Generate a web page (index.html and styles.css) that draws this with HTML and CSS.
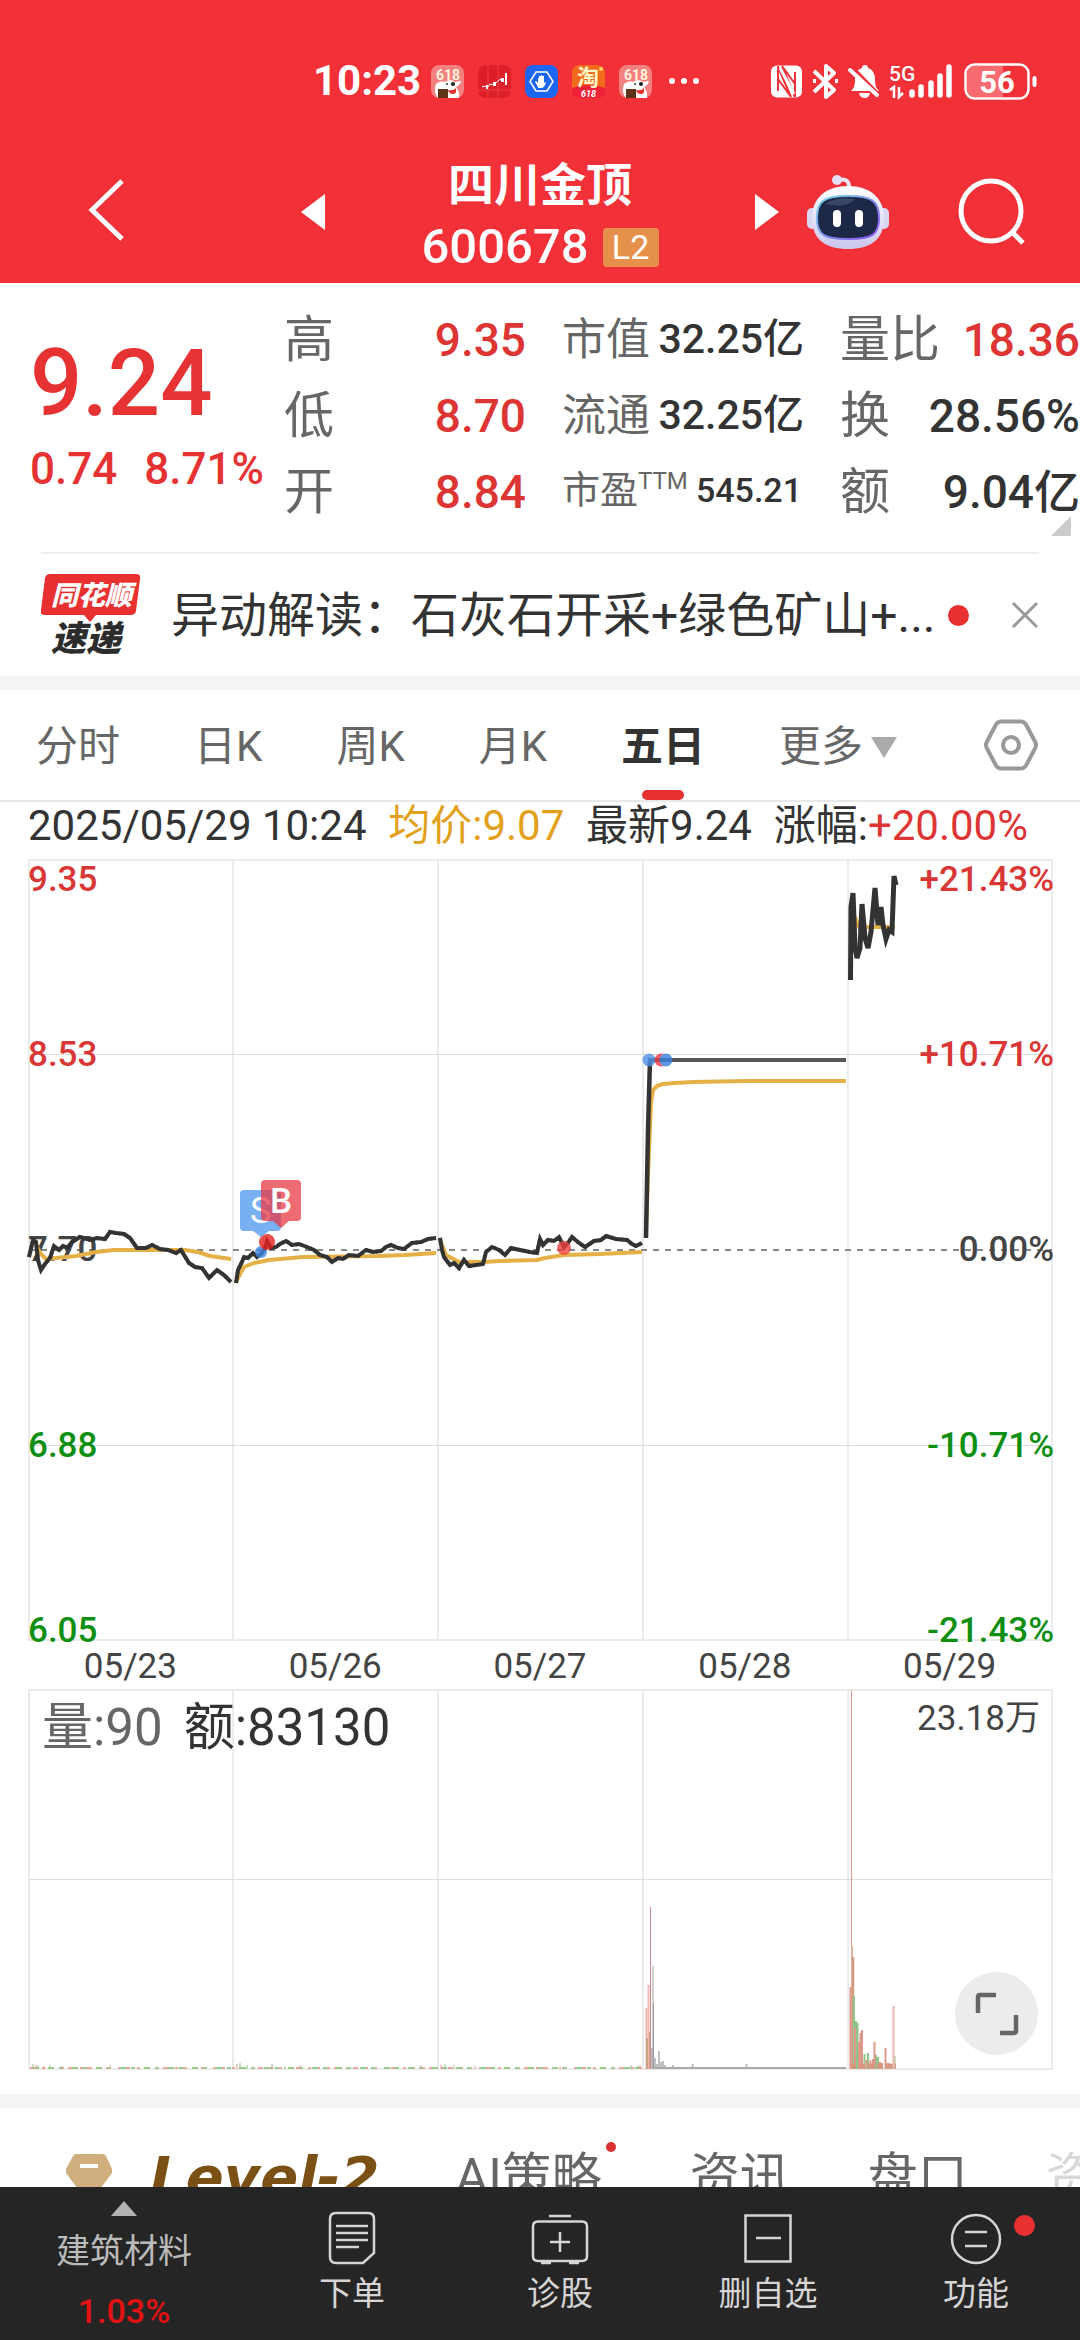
FILE: index.html
```html
<!DOCTYPE html>
<html lang="zh-CN">
<head>
<meta charset="utf-8">
<meta name="viewport" content="width=device-width, initial-scale=1">
<title>四川金顶 600678</title>
<link rel="stylesheet" href="styles.css">
</head>
<body>
<header class="header">
  <div class="status">
    <div class="status-left">
      <span class="clock">10:23</span>
      <svg class="app" viewBox="0 0 33 33" aria-hidden="true"><rect width="33" height="33" rx="8" fill="#f4807f"/><text x="5" y="15" font-size="14" font-weight="700" fill="#fff3dc">618</text><path d="M5 19q5-4 9-2 5-4 10 0 4-1 6-1-1 4-5 6 4 5 3 11H7Q2 27 5 19z" fill="#fff"/><circle cx="16" cy="19" r="1" fill="#333"/><circle cx="22" cy="19" r="2" fill="#222"/><path d="M17 25q6 1 8-2 1 6-3 6-4 0-5-4z" fill="#e2322f"/><rect x="7" y="24" width="10" height="9" fill="#5d3418"/></svg>
      <svg class="app" viewBox="0 0 33 33" aria-hidden="true"><rect width="33" height="33" rx="8" fill="#dc1f28"/><path d="M10 0v33M20 0v33M0 25h33" stroke="#ef4047" fill="none"/><path d="M4 22l3-1 2 2 3-4 3 1 3-2 3-3 4-1" stroke="#fff" fill="none"/><path d="M8 20h2v4H8zM15 17h3v4h-3zM23 13h3v4h-3zM27 8h2v12h-2z" fill="#fff"/></svg>
      <svg class="app" viewBox="0 0 33 33" aria-hidden="true"><rect width="33" height="33" rx="8" fill="#1c66f2"/><path d="M11 7h11l6 9.500-6 9.500H11L5 16.500z" fill="none" stroke="#fff" stroke-width="1.500"/><path d="M13 22l-3-5 1-1 2 2v-5h1v-2h2v-1h1v1h2v7l2-1q-1 5-4 6h-4z" fill="#fff"/></svg>
      <svg class="app" viewBox="0 0 33 33" aria-hidden="true"><rect width="33" height="33" rx="8" fill="#f26a1c"/><path d="M0 23q16-6 33 0v3q0 7-7 7H8q-8 0-8-7z" fill="#ee2138"/><circle cx="29" cy="4" r="2" fill="#ffd36a"/><text x="5" y="20" font-size="22" font-weight="700" fill="#fff8c8">淘</text><text x="9" y="32" font-size="9" font-weight="700" font-style="italic" fill="#fff">618</text></svg>
      <svg class="app" viewBox="0 0 33 33" aria-hidden="true"><rect width="33" height="33" rx="8" fill="#f4807f"/><text x="5" y="15" font-size="14" font-weight="700" fill="#fff3dc">618</text><path d="M5 19q5-4 9-2 5-4 10 0 4-1 6-1-1 4-5 6 4 5 3 11H7Q2 27 5 19z" fill="#fff"/><circle cx="16" cy="19" r="1" fill="#333"/><circle cx="22" cy="19" r="2" fill="#222"/><path d="M17 25q6 1 8-2 1 6-3 6-4 0-5-4z" fill="#e2322f"/><rect x="7" y="24" width="10" height="9" fill="#5d3418"/></svg>
      <svg class="more-dots" width="32" height="8" viewBox="0 0 32 8" fill="#fff" aria-hidden="true"><circle cx="4" cy="4" r="3"/><circle cx="16" cy="4" r="3"/><circle cx="28" cy="4" r="3"/></svg>
    </div>
    <svg class="signals" width="268" height="40" viewBox="768 60 268 40" role="img" aria-label="5G 56%">
      <rect x="770" y="64.500" width="31" height="32" rx="6" fill="#fff"/>
      <path d="M777 65v25M794 96V71" stroke="#f23038" stroke-width="2"/><path d="M781 65l13 18v13zM790 96l-13-18V66z" fill="none" stroke="#f23038" stroke-width="2"/><path d="M779 67l14 26" stroke="#fff" stroke-width="3"/>
      <path d="M813 70l20 19-8 7V65l8 7-20 19M812 80h3M834 80h3" stroke="#fff" stroke-width="4" fill="none" stroke-linejoin="round"/>
      <path d="M850 90q4-3 4-11 0-10 7-12 0-3 3-3t3 3q7 2 7 12 0 8 4 11z" fill="#fff"/><path d="M858 92h11q-1 5-5 5-5 0-6-5z" fill="#fff"/><path d="M850 66l27 28" stroke="#f23038" stroke-width="5"/><path d="M849 69l27 25" stroke="#fff" stroke-width="4" stroke-linecap="round"/>
      <text x="888" y="80" font-size="21" font-weight="500" fill="#fff">5G</text>
      <path d="M889 89l4-3v11M898 86v10l4-4" fill="none" stroke="#fff" stroke-width="2.500"/>
      <path d="M911 91v3M920 86v8M930 82v12M939 75v19M948 66v28" stroke="#fff" stroke-width="5.500" stroke-linecap="round"/>
      <rect x="964.500" y="63.500" width="63" height="34" rx="8" fill="#f23038"/><path d="M1002 65h-30q-6 0-6 7v17q0 7 6 7h30z" fill="#f66a70"/><rect x="964.500" y="63.500" width="63" height="34" rx="9" fill="none" stroke="#fff" stroke-width="2.500"/>
      <path d="M1033.500 77v7" stroke="#fff" stroke-width="4" stroke-linecap="round"/>
      <text x="996" y="92" font-size="31" font-weight="700" fill="#fff" text-anchor="middle">56</text>
    </svg>
  </div>
  <div class="nav">
    <button class="nav-btn back" aria-label="返回"><svg width="38" height="64" viewBox="0 0 38 64"><path d="M34 3L4 32l30 29" fill="none" stroke="#fff" stroke-width="5"/></svg></button>
    <button class="nav-btn prev" aria-label="上一只"><svg width="24" height="36" viewBox="0 0 24 36"><path d="M24 0v36L0 18z" fill="#fff"/></svg></button>
    <h1 class="title"><span class="name">四川金顶</span><span class="code">600678<span class="level">L2</span></span></h1>
    <button class="nav-btn" aria-label="下一只"><svg width="24" height="36" viewBox="0 0 24 36"><path d="M0 0v36l24-18z" fill="#fff"/></svg></button>
    <button class="nav-btn robot" aria-label="智能助手"><svg width="82" height="76" viewBox="0 0 82 76">
      <defs><linearGradient id="shell" x1="0" y1="0" x2="0" y2="1"><stop offset="0" stop-color="#fff"/><stop offset="1" stop-color="#c9c8ee"/></linearGradient><linearGradient id="rim" x1="0" y1="0" x2="1" y2="1"><stop offset="0" stop-color="#6fd6e6"/><stop offset="1" stop-color="#8a4ff0"/></linearGradient></defs>
      <path d="M31 6q12-3 11 9" fill="none" stroke="#ece6f8" stroke-width="4"/><circle cx="30" cy="6" r="5" fill="#e6e0f4"/>
      <rect x="0" y="34" width="10" height="21" rx="5" fill="#d9d7f3"/><rect x="72" y="34" width="10" height="21" rx="5" fill="#d9d7f3"/>
      <path d="M41 12c22 0 36 12 36 32 0 22-14 31-36 31S5 66 5 44c0-20 14-32 36-32z" fill="url(#shell)"/>
      <path d="M41 22c24 0 31 5 31 22s-7 21-31 21-31-4-31-21 7-22 31-22z" fill="#1d2746" stroke="url(#rim)" stroke-width="2"/>
      <path d="M18 30q12-8 30-5-8 10-30 5z" fill="#3b4666"/>
      <rect x="26" y="36" width="8" height="17" rx="4" fill="#fff"/><rect x="48" y="36" width="8" height="17" rx="4" fill="#fff"/></svg></button>
    <button class="nav-btn search" aria-label="搜索"><svg width="68" height="68" viewBox="0 0 68 68"><circle cx="33" cy="33" r="30" fill="none" stroke="#fff" stroke-width="5"/><path d="M54 54l11 11" stroke="#fff" stroke-width="5"/></svg></button>
  </div>
</header>

<main class="main">
  <section class="quote">
    <div class="price">
      <div class="last">9.24</div>
      <div class="change"><span>0.74</span><span>8.71%</span></div>
    </div>
    <dl class="stats">
      <div><dt>高</dt><dd class="up">9.35</dd></div>
      <div><dt>低</dt><dd class="up">8.70</dd></div>
      <div><dt>开</dt><dd class="up">8.84</dd></div>
    </dl>
    <dl class="stats inset compact">
      <div><dt>市值</dt><dd>32.25亿</dd></div>
      <div><dt>流通</dt><dd>32.25亿</dd></div>
      <div class="tiny"><dt>市盈<sup>TTM</sup></dt><dd>545.21</dd></div>
    </dl>
    <dl class="stats inset">
      <div><dt>量比</dt><dd class="up">18.36</dd></div>
      <div><dt>换</dt><dd>28.56%</dd></div>
      <div><dt>额</dt><dd>9.04亿</dd></div>
    </dl>
    <span class="corner"></span>
  </section>

  <section class="news">
    <svg class="news-logo" width="100" height="82" viewBox="0 0 100 82" role="img" aria-label="同花顺速递">
      <path d="M9 0h86q5 0 4 5l-4 32q-1 4-5 4H55l-6 7-6-7H4q-5 0-4-5L4 4q1-4 5-4z" fill="#e83031"/>
      <text x="10" y="31" font-size="27" font-weight="900" font-style="italic" fill="#fff">同花顺</text>
      <text x="10" y="77" font-size="35" font-weight="900" font-style="italic" fill="#2c2c2c">速递</text>
    </svg>
    <a class="news-text" href="#news">异动解读：石灰石开采+绿色矿山+...</a>
    <span class="news-dot"></span>
    <button class="close" aria-label="关闭"><svg width="28" height="28" viewBox="0 0 28 28"><path d="M2 2l24 24M26 2L2 26" stroke="#999" stroke-width="3"/></svg></button>
  </section>

  <div class="band"></div>

  <div class="tabs">
    <button>分时</button><button>日K</button><button>周K</button><button>月K</button><button class="active">五日</button><button class="more">更多<span class="caret"></span></button>
    <button class="gear" aria-label="设置"><svg width="54" height="52" viewBox="0 0 54 52" fill="none" stroke="#999" stroke-width="4"><path d="M17 2.500h20q3 0 5 3l9 17q2 3.500 0 7l-9 17q-2 3-5 3H17q-3 0-5-3l-9-17q-2-3.500 0-7l9-17q2-3 5-3z"/><circle cx="27" cy="26" r="8"/></svg></button>
  </div>

  <div class="readout"><span>2025/05/29 10:24</span><span class="avg">均价:9.07</span><span>最新9.24</span><span>涨幅:<b>+20.00%</b></span></div>

  <svg class="chart" viewBox="0 858 1080 786" role="img" aria-label="五日走势">
    <g fill="none" stroke="#ebebeb" stroke-width="2"><path d="M29 860H1052V1640H29zM233 860V1640M438 860V1640M643 860V1640M848 860V1640"/></g>
    <path d="M29 1054.500H1052M29 1445.500H1052" stroke="#dedede"/>
    <path d="M29 1250H1052" stroke="#888" stroke-width="2" stroke-dasharray="6 6"/>
    <g class="axis">
      <text class="t-up" x="28" y="891">9.35</text><text class="t-up" x="28" y="1066">8.53</text><text x="28" y="1261">7.70</text><text class="t-down" x="28" y="1457">6.88</text><text class="t-down" x="28" y="1642">6.05</text>
      <g text-anchor="end"><text class="t-up" x="1054" y="891">+21.43%</text><text class="t-up" x="1054" y="1066">+10.71%</text><text x="1054" y="1261">0.00%</text><text class="t-down" x="1054" y="1457">-10.71%</text><text class="t-down" x="1054" y="1642">-21.43%</text></g>
    </g>
    <g fill="none" stroke="#e5b045" stroke-width="4" stroke-linejoin="round">
      <path d="M36 1244L40 1253 46 1259 76 1256 96 1252 114 1250 185 1250 198 1252 210 1256 231 1259"/>
      <path d="M236 1282L240 1274 244 1267 254 1263 269 1260 303 1257 379 1256 405 1255 436 1253"/>
      <path d="M440 1240L446 1255 459 1262 484 1262 500 1261 537 1260 545 1258 564 1255 600 1254 642 1252"/>
      <path d="M646 1230L649 1150 651 1103 653 1090 657 1086 663 1084 675 1083 693 1082 747 1081 846 1081"/>
      <path d="M852 912L856 920 859 927 895 927"/>
    </g>
    <g class="wiggle">
      <path id="d1" d="M29 1257L33 1240 36 1242 38 1260 41 1270 45 1264 50 1258 54 1246 59 1250 63 1246 67 1248 72 1242 80 1237 90 1240 97 1238 105 1239 110 1232 116 1233 124 1234 130 1238 137 1248 146 1248 152 1245 160 1249 168 1250 176 1253 181 1250 189 1263 195 1267 202 1268 209 1278 217 1270 224 1275 231 1282"/>
      <path id="d2" d="M236 1283L238 1270 242 1262 244 1257 248 1258 253 1253 257 1257 262 1253 265 1248 267 1241 271 1248 276 1247 280 1244 286 1241 292 1245 299 1244 307 1247 314 1250 320 1255 327 1257 332 1262 338 1258 343 1259 349 1255 358 1256 366 1250 373 1252 381 1251 386 1247 391 1245 398 1248 404 1249 412 1243 421 1242 428 1239 436 1238"/>
      <path id="d3" d="M440 1238L442 1250 444 1257 450 1265 454 1263 459 1268 464 1260 469 1266 476 1265 483 1264 486 1252 492 1247 499 1250 505 1255 511 1248 520 1250 530 1252 537 1253 540 1239 543 1245 548 1240 554 1241 559 1237 564 1247 568 1243 572 1237 579 1243 585 1247 594 1241 601 1240 606 1236 616 1239 627 1240 632 1244 636 1246 642 1243"/>
    </g>
    <g class="ticks"><use href="#d1"/><use href="#d2"/><use href="#d3"/></g>
    <path d="M646 1238L648 1130 650 1060" fill="none" stroke="#333" stroke-width="4.500"/>
    <path d="M648 1060H846" stroke="#555" stroke-width="4"/>
    <path d="M850.500 980L851 907 853 893 855 947 857 958 860 948 862 904 865 938 868 948 871 932 875 888 878 925 881 907 883 925 886 939 889 930 892 932 894 876 896 885" fill="none" stroke="#333" stroke-width="5"/>
    <g opacity=".8"><circle cx="649" cy="1060" r="6.500" fill="#4a8fe6"/><circle cx="661" cy="1060" r="6.500" fill="#e83a44"/><circle cx="666" cy="1060" r="6.500" fill="#3a7fe0"/><circle cx="261" cy="1252" r="6" fill="#3d84e4"/><circle cx="267" cy="1242" r="8" fill="#e62020"/><circle cx="564" cy="1248" r="7" fill="#f04040"/></g>
    <path d="M244 1190h33q4 0 4 4v33q0 4-4 4h-8l-8 6-8-6h-9q-4 0-4-4v-33q0-4 4-4z" fill="#79b0f2"/>
    <text x="250" y="1223" font-size="36" fill="#fff">S</text>
    <path d="M265 1180h32q4 0 4 4v33q0 4-4 4h-8l-8 7-8-7h-8q-4 0-4-4v-33q0-4 4-4z" fill="#e83a44" opacity=".75"/>
    <text x="270" y="1213" font-size="35" font-weight="500" fill="#fff">B</text>
  </svg>

  <div class="dates"><span>05/23</span><span>05/26</span><span>05/27</span><span>05/28</span><span>05/29</span></div>

  <section class="volume">
    <svg class="chart" viewBox="0 1688 1080 384" role="img" aria-label="成交量">
      <path d="M29 1690H1052V2069H29zM233 1690V2069M438 1690V2069M643 1690V2069M848 1690V2069" fill="none" stroke="#ebebeb" stroke-width="2"/>
      <path d="M29 1879.500H1052" stroke="#dedede"/>
      <g fill="none" stroke-width="2">
        <path d="M30 2068H642" stroke="#e9aaa2" stroke-dasharray="5 7 3 4"/><path d="M35 2068H642" stroke="#9ccb94" stroke-dasharray="4 9 6 5"/>
        <path d="M33 2069v-5M38 2069v-3M50 2069v-4M240 2069v-6M247 2069v-4M272 2069v-5M285 2069v-3M445 2069v-5M454 2069v-4M631 2069v-4M638 2069v-3" stroke="#8dc486" stroke-width="1"/>
        <path d="M36 2069v-4M44 2069v-3M62 2069v-3M110 2069v-4M237 2069v-5M300 2069v-4M421 2069v-4M441 2069v-4M475 2069v-3M560 2069v-3M640 2069v-4" stroke="#e59a92" stroke-width="1"/>
        <path d="M646.500 2069V2008" stroke="#eeb3ae"/><path d="M648.500 2069V1985" stroke="#efb9b4"/><path d="M647 2069V2038M650 2069V2032" stroke="#c7a582"/>
        <path d="M650.500 2069V1907" stroke="#cf8b91" stroke-width="1"/><path d="M653 2069V1966" stroke="#d8cccf"/><path d="M653.500 2069V2003" stroke="#999" stroke-width="1"/>
        <path d="M652 2069V2048M655 2069V2058M657 2069V2064M659 2069V2051M661 2069V2062M663 2069V2061M665 2069V2065M673 2069V2065M692.500 2069V2064M746.500 2069V2064" stroke="#aaa" stroke-width="1.500"/>
        <path d="M655 2068H846" stroke="#aaa"/>
        <path d="M850.500 2069V1987" stroke="#df958c"/><path d="M851.500 1946V1690" stroke="#e79a9a" stroke-width="1"/>
        <path d="M852 2069V1946M853.500 2069V1957" stroke="#d49c80" stroke-width="1.500"/><path d="M854 2069V1996M856 2069V2021M857.500 2069V2023M860 2069V2045M864.500 2069V2054M868 2069V2053M876 2069V2055M878 2069V2057" stroke="#8fc588"/>
        <path d="M855 2069V2028M859 2069V2042M860.500 2069V2033M862 2069V2030M866.500 2069V2060M870.500 2069V2060M874.500 2069V2042M873 2069V2059M880 2069V2062M882 2069V2063M885.500 2069V2048M888 2069V2063M892 2069V2064" stroke="#dd988a"/>
        <path d="M893.500 2069V2006" stroke="#eab7b2"/><path d="M895 2069V2056" stroke="#a9b58a" stroke-width="1"/>
        <path d="M850 2066H896" stroke="#d8957f" stroke-width="5" stroke-dasharray="6 3"/>
      </g>
    </svg>
    <div class="vol-head"><span class="vol-qty">量:90</span><span class="vol-amt">额:83130</span><span class="vol-max">23.18万</span></div>
    <button class="expand" aria-label="全屏"><svg width="44" height="44" viewBox="0 0 44 44" fill="none" stroke="#666" stroke-width="4.500"><path d="M3 21V5q0-2 2-2h16M25 41h14q2 0 2-2V23"/></svg></button>
  </section>

  <div class="band"></div>

  <div class="sub-tabs">
    <a class="lv2" href="#level2"><svg width="46" height="46" viewBox="0 0 46 46" aria-hidden="true"><path d="M10 0h27q2 0 3 2l6 13q1 2 0 4L34 35H12L0 19q-1-2 0-4L7 2q1-2 3-2z" fill="#d1ae7e"/><rect x="14" y="10" width="18" height="4" fill="#fff"/></svg><span>Level-2</span></a>
    <a class="ai" href="#ai">AI策略<i class="tip"></i></a>
    <a href="#info">资讯</a>
    <a href="#depth">盘口</a>
    <a class="faded" href="#funds">资金</a>
  </div>
</main>

<footer class="toolbar">
  <button class="sector"><span class="arrow"></span><span class="sector-name">建筑材料</span><span class="sector-pct">1.03%</span></button>
  <button><svg width="48" height="54" viewBox="0 0 48 54" fill="none" stroke="#d6d4d5" stroke-width="2.500"><path d="M8 2h32q6 0 6 6v34L35 52H8q-6 0-6-6V8q0-6 6-6zM8 15h32M8 22h32M8 29h32M8 36h23"/></svg><span>下单</span></button>
  <button><svg width="58" height="54" viewBox="0 0 58 54" fill="none" stroke="#d6d4d5" stroke-width="2.500"><path d="M18 5h22M7 10.500h44q5 0 5 5V45q0 5-5 5H7q-5 0-5-5V15.500q0-5 5-5zM29 21v20M19 31h20M10 52h10M38 52h10"/></svg><span>诊股</span></button>
  <button><svg width="48" height="54" viewBox="0 0 48 54" fill="none" stroke="#d6d4d5" stroke-width="2.500"><path d="M1.500 4.500h45v46h-45zM12 27h25"/></svg><span>删自选</span></button>
  <button><svg width="52" height="54" viewBox="0 0 52 54" fill="none" stroke="#d6d4d5" stroke-width="2.500"><circle cx="26" cy="28" r="24"/><path d="M15 21h22M15 35h22"/></svg><span>功能</span><i class="badge"></i></button>
</footer>
</body>
</html>
```
FILE: styles.css
```css
* { box-sizing: border-box; }
body {
  margin: 0;
  height: 100vh;
  display: flex;
  flex-direction: column;
  overflow: hidden;
  background: #fff;
  color: #333;
  font-family: Roboto, "Noto Sans CJK SC", sans-serif;
}
button {
  border: 0;
  padding: 0;
  background: none;
  color: inherit;
  font: inherit;
}
a { color: inherit; text-decoration: none; }
svg { display: block; flex: none; }
dl, dd, h1 { margin: 0; }

/* Header */
.header { flex: none; background: #f23038; color: #fff; padding-top: 51px; }
.status {
  display: flex;
  justify-content: space-between;
  align-items: center;
  height: 60px;
  padding: 0 43px 0 313px;
}
.status-left { display: flex; align-items: center; gap: 14px; }
.clock { font-size: 42px; font-weight: 700; line-height: 60px; margin-right: -4px; }
.app { width: 33px; height: 33px; }
.more-dots { margin-left: 2px; }
.nav { display: flex; align-items: center; padding: 43px 54px 5px 88px; }
.nav-btn { flex: none; padding-bottom: 8px; }
.back { padding-bottom: 12px; }
.prev { margin-left: 175px; }
.robot { margin-left: 28px; }
.search { margin-left: 69px; }
.title {
  flex: 1;
  display: flex;
  flex-direction: column;
  align-items: center;
  font-size: 46px;
  font-weight: 500;
  line-height: 62px;
}
.name { font-weight: 700; }
.code { display: flex; align-items: center; gap: 14px; font-size: 49px; }
.level {
  width: 56px;
  border-radius: 4px;
  background: #e6914b;
  font-size: 34px;
  font-weight: 400;
  line-height: 39px;
  text-align: center;
}

/* Content */
.main { flex: 1; min-height: 0; overflow: hidden; }
.up { color: #dd3434; }
.quote {
  position: relative;
  display: grid;
  grid-template-columns: minmax(0, 234fr) minmax(0, 242fr) minmax(0, 258fr) minmax(0, 256fr);
  column-gap: 20px;
  padding: 17px 0 24px 30px;
  white-space: nowrap;
}
.price { color: #e63232; font-weight: 500; padding-top: 24px; }
.last { font-size: 92px; line-height: 120px; }
.change { display: flex; justify-content: space-between; font-size: 44px; line-height: 50px; }
.stats > div { display: flex; justify-content: space-between; align-items: center; height: 76px; }
.stats dt { font-size: 50px; line-height: 68px; padding-top: 3px; color: #666; }
.stats dd { font-size: 46px; line-height: 68px; font-weight: 500; padding-top: 3px; }
.inset { padding-left: 16px; }
.compact dt { font-size: 44px; }
.stats.compact dd { font-size: 41px; padding-top: 2px; }
.stats.compact .tiny dt { font-size: 38px; padding-top: 0; }
.stats.compact .tiny dd { font-size: 34px; padding-top: 0; padding-right: 2px; }
.tiny sup { font-size: 24px; line-height: 0; }
.corner {
  position: absolute;
  right: 9px;
  bottom: 16px;
  border-left: 20px solid transparent;
  border-bottom: 20px solid #ccc;
}

.news {
  display: flex;
  align-items: center;
  height: 124px;
  margin: 0 41px;
  border-top: 2px solid #eee;
}
.news-text { flex: 1; margin-left: 30px; padding-bottom: 8px; font-size: 48px; white-space: nowrap; }
.news-dot { width: 21px; height: 21px; margin-right: 42px; border-radius: 50%; background: #e83031; }
.band { height: 14px; background: #f4f4f4; }

.tabs {
  display: flex;
  gap: 74px;
  align-items: center;
  height: 112px;
  padding: 0 42px 0 36px;
  border-bottom: 2px solid #e8e8e8;
  font-size: 42px;
  color: #666;
}
.tabs button { position: relative; line-height: 106px; padding-top: 4px; white-space: nowrap; }
.tabs .active { color: #333; font-weight: 700; }
.active::after {
  content: "";
  position: absolute;
  left: 50%;
  bottom: 0;
  width: 42px;
  height: 10px;
  margin-left: -21px;
  border-radius: 5px;
  background: #e83031;
}
.tabs .more { display: flex; align-items: center; gap: 8px; }
.tabs .gear { margin-left: auto; padding-top: 0; }
.caret { border: 13px solid transparent; border-top: 21px solid #aaa; border-bottom: 0; }

.readout {
  display: flex;
  justify-content: space-between;
  padding: 0 52px 8px 28px;
  font-size: 42px;
  line-height: 48px;
  white-space: nowrap;
}
.readout b { color: #dd3434; font-weight: 400; }
.avg { color: #e3a01b; }

.chart { width: 100%; height: auto; overflow: visible; }
.axis { font-size: 35px; font-weight: 500; fill: #444; }
.t-up { fill: #d93636; }
.t-down { fill: #0f8f12; }
.wiggle path { fill: none; stroke: #333; stroke-width: 4px; }
.ticks { fill: none; }
.ticks use { fill: none; stroke: #333; stroke-width: 8px; stroke-dasharray: 1 4; }
.dates {
  display: grid;
  grid-template-columns: repeat(5, 1fr);
  padding: 2px 28px 0;
  font-size: 35px;
  line-height: 42px;
  text-align: center;
  color: #444;
}

.volume { position: relative; margin-bottom: 22px; }
.vol-head {
  position: absolute;
  inset: 6px 40px auto 42px;
  display: flex;
  gap: 21px;
  font-size: 51px;
  line-height: 68px;
}
.vol-qty { color: #666; }
.vol-max { margin-left: auto; font-size: 35px; line-height: 50px; color: #444; }
.expand {
  position: absolute;
  right: 42px;
  bottom: 17px;
  display: flex;
  align-items: center;
  justify-content: center;
  width: 83px;
  height: 83px;
  border-radius: 50%;
  background: #ececec;
}

.sub-tabs {
  display: flex;
  align-items: center;
  padding: 32px 0 32px 66px;
  font-size: 50px;
  line-height: 74px;
  color: #666;
  white-space: nowrap;
}
.sub-tabs a { flex: none; margin-right: 78px; }
.sub-tabs .lv2 {
  display: flex;
  align-items: center;
  gap: 38px;
  margin-right: 76px;
  font-family: "DejaVu Sans", sans-serif;
  font-size: 56px;
  font-weight: 700;
  font-style: italic;
  color: #7a5014;
}
.sub-tabs .ai { position: relative; margin-right: 88px; }
.tip {
  position: absolute;
  top: 2px;
  right: -14px;
  width: 10px;
  height: 10px;
  border-radius: 50%;
  background: #d93030;
}
.faded { opacity: .25; }

/* Bottom toolbar */
.toolbar {
  flex: none;
  display: grid;
  grid-template-columns: 248fr 208fr 208fr 208fr 208fr;
  height: 153px;
  background: #252525;
  color: #d6d4d5;
  font-size: 33px;
}
.toolbar button {
  position: relative;
  display: flex;
  flex-direction: column;
  align-items: center;
  padding-top: 24px;
  line-height: 58px;
}
.toolbar .sector { padding-top: 14px; color: #bbb; font-size: 34px; }
.arrow { border: 13px solid transparent; border-bottom: 15px solid #b3b3b3; border-top: 0; }
.sector-name { line-height: 70px; }
.sector-pct { line-height: 50px; font-weight: 500; color: #e01212; }
.badge {
  position: absolute;
  left: 50%;
  top: 28px;
  width: 21px;
  height: 21px;
  margin-left: 38px;
  border-radius: 50%;
  background: #e83031;
}
```
